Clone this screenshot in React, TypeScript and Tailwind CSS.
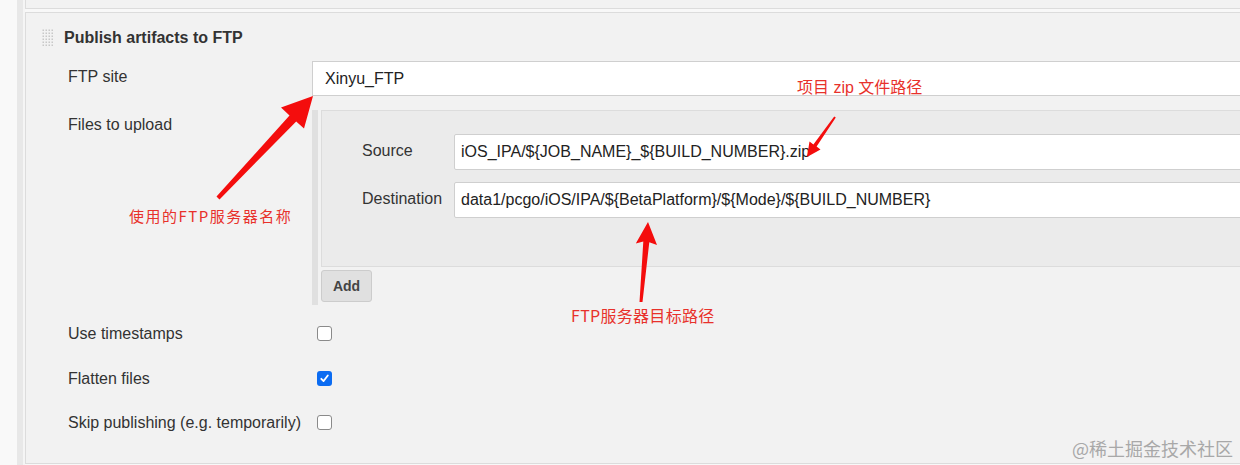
import React from "react";

const Grip = () => {
  const dots: React.ReactElement[] = [];
  for (let r = 0; r < 6; r++) {
    for (let c = 0; c < 4; c++) {
      dots.push(<rect key={`${r}-${c}`} x={c * 3 + 0.5} y={r * 3 + 0.5} width={1.5} height={1.5} fill="#c8c8c8" />);
    }
  }
  return (
    <svg width="12" height="18" viewBox="0 0 12 18">
      {dots}
    </svg>
  );
};

const Checkbox = ({ checked }: { checked?: boolean }) =>
  checked ? (
    <div className="w-[15px] h-[15px] rounded-[3px] bg-[#0b6cf2] flex items-center justify-center">
      <svg width="11" height="11" viewBox="0 0 12 12">
        <path d="M2.5 6.3 L5 8.8 L9.6 2.8" stroke="#fff" strokeWidth="2" fill="none" strokeLinecap="round" strokeLinejoin="round" />
      </svg>
    </div>
  ) : (
    <div className="w-[15px] h-[15px] rounded-[3px] bg-white border border-[#8a8a8a]" />
  );

export default function App() {
  const label = "text-[16px] leading-[20px] text-[#333]";
  return (
    <div className="relative w-[1240px] h-[465px] overflow-hidden bg-[#f8f8f8] flex font-['Liberation_Sans','Noto_Sans_CJK_SC',sans-serif]">
      <div className="w-[17px] shrink-0 bg-[#f9f9f9]" />
      <div className="w-[6px] shrink-0 bg-[#e8e8e8]" />
      <div className="w-[2px] shrink-0 bg-[#f5f5f5]" />
      <div className="flex-1 flex flex-col mr-[-30px]">
        <div className="h-[9px] bg-[#f2f2f2] border-l border-b border-[#dcdcdc]" />
        <div className="h-[3px]" />
        <div className="h-[452px] bg-[#f2f2f2] border-l border-t border-b border-[#dcdcdc] flex flex-col">
          {/* heading */}
          <div className="pt-[16px] pl-[16px] flex items-center">
            <Grip />
            <div className="ml-[10px] text-[16px] leading-[18px] font-bold text-[#333]">Publish artifacts to FTP</div>
          </div>

          {/* FTP site */}
          <div className="mt-[14px] pl-[42px] flex">
            <div className={`w-[244px] shrink-0 pt-[6px] ${label}`}>FTP site</div>
            <div className="flex-1 h-[35px] bg-white border border-[#cfcfcf] pl-[12px] flex items-center text-[16px] text-[#222]">
              Xinyu_FTP
            </div>
          </div>

          {/* Files to upload */}
          <div className="mt-[14px] pl-[42px] flex">
            <div className={`w-[244px] shrink-0 pt-[5px] ${label}`}>Files to upload</div>
            <div className="flex-1 flex">
              <div className="w-[6px] shrink-0 bg-[#e0e0e0]" />
              <div className="ml-[3px] flex-1 flex flex-col pb-[3px]">
                <div className="bg-[#ebebeb] border border-[#dcdcdc] pt-[23px] pl-[40px] pb-[48px]">
                  <div className="flex items-center h-[36px]">
                    <div className={`w-[92px] shrink-0 ${label} -mt-[3px]`}>Source</div>
                    <div className="flex-1 h-[36px] bg-white border border-[#cfcfcf] rounded-l-[2px] pl-[6px] flex items-center text-[16px] text-[#222]">
                      iOS_IPA/${"{JOB_NAME}"}_${"{BUILD_NUMBER}"}.zip
                    </div>
                  </div>
                  <div className="mt-[12px] flex items-center h-[36px]">
                    <div className={`w-[92px] shrink-0 ${label} -mt-[3px]`}>Destination</div>
                    <div className="flex-1 h-[36px] bg-white border border-[#cfcfcf] rounded-l-[2px] pl-[6px] flex items-center text-[16px] text-[#222]">
                      data1/pcgo/iOS/IPA/${"{BetaPlatform}"}/${"{Mode}"}/${"{BUILD_NUMBER}"}
                    </div>
                  </div>
                </div>
                <div className="mt-[3px] w-[51px] h-[32px] bg-[#e0e0e0] border border-[#cccccc] rounded-[3px] flex items-center justify-center text-[14px] font-bold text-[#444]">
                  Add
                </div>
              </div>
            </div>
          </div>

          {/* checkboxes */}
          <div className="mt-[14px] pl-[42px] flex items-center h-[30px]">
            <div className={`w-[244px] shrink-0 ${label}`}>Use timestamps</div>
            <div className="ml-[5px] -mt-[1px]"><Checkbox /></div>
          </div>
          <div className="mt-[15px] pl-[42px] flex items-center h-[30px]">
            <div className={`w-[244px] shrink-0 ${label}`}>Flatten files</div>
            <div className="ml-[5px] -mt-[1px]"><Checkbox checked /></div>
          </div>
          <div className="mt-[14px] pl-[42px] flex items-center h-[30px]">
            <div className={`w-[244px] shrink-0 ${label}`}>Skip publishing (e.g. temporarily)</div>
            <div className="ml-[5px] -mt-[1px]"><Checkbox /></div>
          </div>
        </div>
      </div>

      {/* annotations overlay */}
      <svg className="absolute left-0 top-0 pointer-events-none" width="1240" height="465">
        <polygon
          fill="#f40d0d"
          points="216.5,196.6 289.5,115.5 281,107.5 313,96 304,128.5 296.2,121.4 219.5,199.4"
        />
        <polygon
          fill="#f40d0d"
          points="834.2,116.4 813.4,144.4 809.5,141.5 807,157 820.5,149.5 816.6,146.6 835.8,117.6"
        />
        <polygon
          fill="#f40d0d"
          points="639.5,301.9 643.3,241.6 635.8,243.5 648,222 657,245 649.3,242.2 642.5,302.1"
        />
      </svg>
      <div className="absolute left-[797px] top-[78px] text-[16px] leading-[20px] text-[#e8312b] whitespace-nowrap">
        项目 zip 文件路径
      </div>
      <div className="absolute left-[129px] top-[206px] text-[15px] leading-[20px] tracking-[1.5px] text-[#e8312b] whitespace-nowrap font-['Noto_Sans_CJK_SC',sans-serif]">
        使用的FTP服务器名称
      </div>
      <div className="absolute left-[571px] top-[305px] text-[16px] leading-[20px] tracking-[0.3px] text-[#e8312b] whitespace-nowrap font-['Noto_Sans_CJK_SC',sans-serif]">
        FTP服务器目标路径
      </div>
      <div className="absolute right-[7px] top-[436px] text-[18px] leading-[24px] text-[#a8a8a8] whitespace-nowrap font-['Noto_Sans_CJK_SC',sans-serif]">
        @稀土掘金技术社区
      </div>
    </div>
  );
}
